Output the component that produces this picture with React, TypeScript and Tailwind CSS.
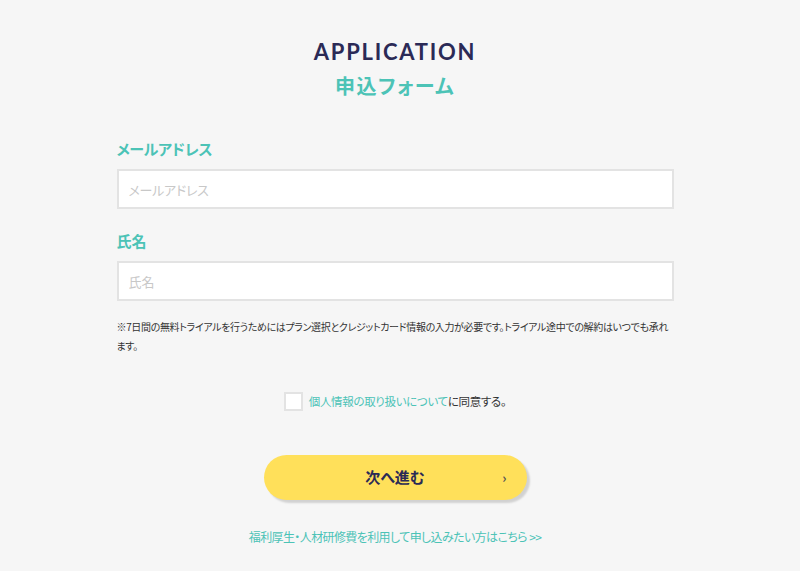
import React from 'react';

export default function App() {
  return (
    <div className="min-h-[571px] w-full bg-[#f6f6f6] font-['Noto_Sans_CJK_JP','Noto_Sans',sans-serif] [font-feature-settings:'palt']">
      <div className="w-[790px]">
        <div className="mx-auto w-[557px] pt-[39px]">
          {/* Title */}
          <div className="text-center">
            <h1 className="font-['Lato','Noto_Sans',sans-serif] text-[22px] font-bold leading-[26px] tracking-[0.08em] text-[#2b2a56]">
              APPLICATION
            </h1>
            <h2 className="mt-[9px] text-[20px] font-bold leading-[24px] tracking-[0.07em] text-[#4cc3b6]">
              申込フォーム
            </h2>
          </div>

          {/* Fields */}
          <div className="mt-[40px]">
            <label className="block text-[15px] font-bold leading-[22px] tracking-[-0.02em] text-[#4cc3b6]">メールアドレス</label>
            <input
              type="text"
              placeholder="メールアドレス"
              className="mt-[9px] block h-[40px] w-full border-2 border-[#e3e3e3] bg-white px-[10px] text-[13px] tracking-[-0.02em] text-[#333] placeholder:text-[#c8c8c8] outline-none"
            />
          </div>
          <div className="mt-[21px]">
            <label className="block text-[15px] font-bold leading-[22px] text-[#4cc3b6]">氏名</label>
            <input
              type="text"
              placeholder="氏名"
              className="mt-[9px] block h-[40px] w-full border-2 border-[#e3e3e3] bg-white px-[10px] text-[13px] text-[#333] placeholder:text-[#c8c8c8] outline-none"
            />
          </div>

          <p className="mt-[16px] text-[10px] leading-[19px] tracking-[-0.035em] text-[#333]">
            ※7日間の無料トライアルを行うためにはプラン選択とクレジットカード情報の入力が必要です。トライアル途中での解約はいつでも承れます。
          </p>

          {/* Agreement */}
          <div className="mt-[37px] flex items-center justify-center">
            <span className="h-[19px] w-[19px] border-2 border-[#e3e3e3] bg-white" />
            <span className="ml-[6px] text-[11.5px] tracking-[-0.03em] text-[#333]">
              <a className="text-[#4cc3b6]">個人情報の取り扱いについて</a>に同意する。
            </span>
          </div>

          {/* Button */}
          <div className="mt-[44px] flex justify-center">
            <button className="relative flex h-[45px] w-[263px] items-center justify-center rounded-full bg-[#ffe05a] text-[15px] font-bold text-[#2b2a56] shadow-[3px_3px_2px_rgba(0,0,0,0.15)]">
              次へ進む
              <span className="absolute right-[20px] top-1/2 -translate-y-1/2 text-[13px] font-bold text-[#555]">›</span>
            </button>
          </div>

          <div className="mt-[28px] text-center text-[12px] tracking-[-0.05em] text-[#4cc3b6]">
            福利厚生・人材研修費を利用して申し込みたい方はこちら &gt;&gt;
          </div>
        </div>
      </div>
    </div>
  );
}
